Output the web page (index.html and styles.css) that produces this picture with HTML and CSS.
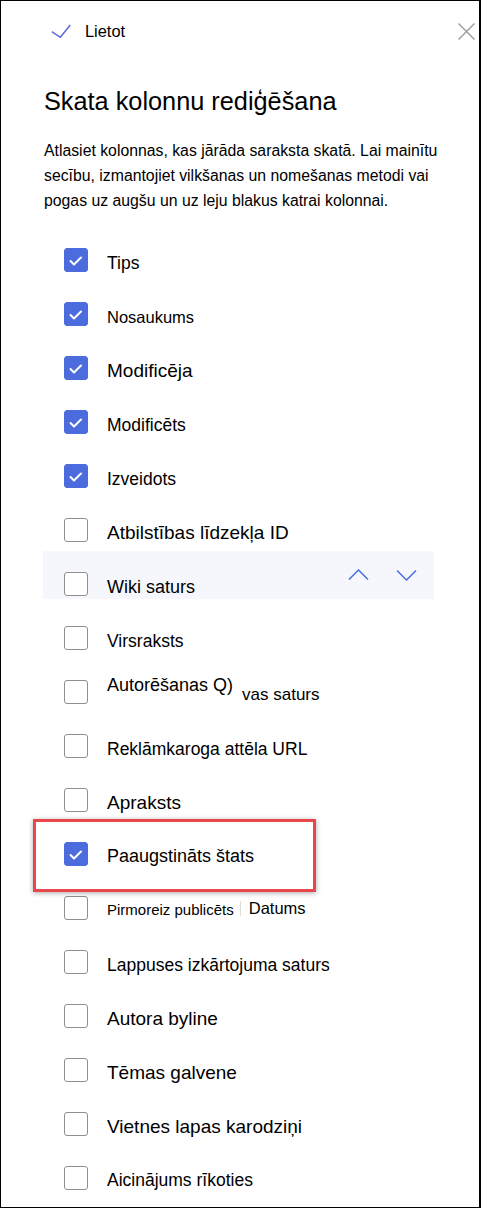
FILE: index.html
```html
<!DOCTYPE html>
<html lang="lv">

<head>
  <meta charset="UTF-8" />
  <meta name="viewport" content="width=device-width, initial-scale=1.0" />
  <title>Skata kolonnu rediģēšana</title>
  <link rel="stylesheet" href="styles.css">
</head>

<body>
  <div class="panel">
    <div class="panel-header">
      <button class="apply">
        <svg width="20" height="14" viewBox="0 0 20 14"><polyline points="0.8,7.6 9.3,13.3 19.3,1" /></svg>
        <span>Lietot</span>
      </button>
      <button class="close">
        <svg width="17" height="17" viewBox="0 0 17 17"><path d="M0.5 0.5 L16.5 16.5 M16.5 0.5 L0.5 16.5" /></svg>
      </button>
    </div>

    <h1 class="panel-title">Skata kolonnu rediģēšana</h1>
    <p class="panel-desc">Atlasiet kolonnas, kas jārāda saraksta skatā. Lai mainītu secību, izmantojiet vilkšanas un nomešanas metodi vai pogas uz augšu un uz leju blakus katrai kolonnai.</p>

    <ul class="columns">
      <li class="column checked"><span class="box"><svg width="24" height="24" viewBox="0 0 24 24"><polyline points="6.5,13 10,16.5 17,9.5" /></svg></span><span class="label s175">Tips</span></li>
      <li class="column checked"><span class="box"><svg width="24" height="24" viewBox="0 0 24 24"><polyline points="6.5,13 10,16.5 17,9.5" /></svg></span><span class="label s165 low">Nosaukums</span></li>
      <li class="column checked"><span class="box"><svg width="24" height="24" viewBox="0 0 24 24"><polyline points="6.5,13 10,16.5 17,9.5" /></svg></span><span class="label s19">Modificēja</span></li>
      <li class="column checked"><span class="box"><svg width="24" height="24" viewBox="0 0 24 24"><polyline points="6.5,13 10,16.5 17,9.5" /></svg></span><span class="label s175">Modificēts</span></li>
      <li class="column checked"><span class="box"><svg width="24" height="24" viewBox="0 0 24 24"><polyline points="6.5,13 10,16.5 17,9.5" /></svg></span><span class="label s175">Izveidots</span></li>
      <li class="column"><span class="box"></span><span class="label s19">Atbilstības līdzekļa ID</span></li>
      <li class="column hovered">
        <span class="box"></span><span class="label s18">Wiki saturs</span>
        <span class="reorder">
          <svg width="21" height="12" viewBox="0 0 21 12"><polyline points="1,10.5 10.5,1 20,10.5" /></svg>
          <svg width="21" height="12" viewBox="0 0 21 12"><polyline points="1,1.5 10.5,11 20,1.5" /></svg>
        </span>
      </li>
      <li class="column"><span class="box"></span><span class="label s175">Virsraksts</span></li>
      <li class="column"><span class="box"></span><span class="label s18 raised">Autorēšanas Q)</span><span class="label s17 extra">vas saturs</span></li>
      <li class="column"><span class="box"></span><span class="label s175">Reklāmkaroga attēla URL</span></li>
      <li class="column"><span class="box"></span><span class="label s19">Apraksts</span></li>
      <li class="column checked flagged"><span class="box"><svg width="24" height="24" viewBox="0 0 24 24"><polyline points="6.5,13 10,16.5 17,9.5" /></svg></span><span class="label s18 low">Paaugstināts štats</span></li>
      <li class="column"><span class="box"></span><span class="label s15 lower">Pirmoreiz publicēts</span><span class="sep"></span><span class="label s165 lower after-sep">Datums</span></li>
      <li class="column"><span class="box"></span><span class="label s175">Lappuses izkārtojuma saturs</span></li>
      <li class="column"><span class="box"></span><span class="label s19">Autora byline</span></li>
      <li class="column"><span class="box"></span><span class="label s19">Tēmas galvene</span></li>
      <li class="column"><span class="box"></span><span class="label s19">Vietnes lapas karodziņi</span></li>
      <li class="column"><span class="box"></span><span class="label s175 low">Aicinājums rīkoties</span></li>
    </ul>
  </div>
</body>

</html>
```

FILE: styles.css
```css
body {
  margin: 0;
  font-family: "Liberation Sans", Arial, sans-serif;
  color: #000;
  background: #fff;
}

.panel {
  width: 481px;
  height: 1208px;
  box-sizing: border-box;
  border: 1px solid #000;
  border-right-width: 2px;
  padding: 0 4px 0 42px;
}

/* header: apply + close */
.panel-header {
  display: flex;
  justify-content: space-between;
  padding-top: 20px;
}

button {
  border: 0;
  background: none;
  padding: 0;
  font: inherit;
  color: inherit;
  cursor: pointer;
}

.apply {
  display: flex;
  align-items: center;
  gap: 14px;
  height: 20px;
  margin-left: 8px;
  font-size: 16.4px;
  line-height: 20px;
}

.apply svg polyline {
  fill: none;
  stroke: #5b6cd8;
  stroke-width: 1.5;
}

.close svg {
  display: block;
}

.close svg path {
  stroke: #9a9a9a;
  stroke-width: 1.4;
}

.panel-title {
  margin: 44px 0 0 1px;
  font-size: 25.3px;
  line-height: 32px;
  font-weight: normal;
}

.panel-desc {
  margin: 21px 0 0 1px;
  width: 404px;
  font-size: 15.8px;
  line-height: 25px;
}

/* column list */
.columns {
  list-style: none;
  margin: 14px 0 0 0;
  padding: 0;
  width: 391px;
}

.column {
  display: flex;
  align-items: flex-end;
  height: 54px;
  box-sizing: border-box;
  padding: 0 17px 9px 21px;
}

.box {
  flex: none;
  width: 24px;
  height: 24px;
  box-sizing: border-box;
  border: 1px solid #8e8e8e;
  border-radius: 3px;
  background: #fff;
}

.box svg {
  display: block;
  margin: -1px;
}

.checked .box {
  border-color: #4c6bdc;
  background: #4c6bdc;
}

.box polyline {
  fill: none;
  stroke: #fff;
  stroke-width: 2;
  stroke-linecap: round;
  stroke-linejoin: round;
}

.label {
  margin-left: 19px;
  line-height: 1;
  white-space: nowrap;
}

.s15 { font-size: 15px; }
.s165 { font-size: 16.5px; }
.s17 { font-size: 17px; }
.s175 { font-size: 17.5px; }
.s18 { font-size: 18px; }
.s19 { font-size: 19px; }

.low { margin-bottom: 1px; }
.lower { margin-bottom: 3.5px; }
.raised { margin-bottom: 10px; }

.extra {
  margin-left: 9px;
  margin-bottom: 1px;
}

.sep {
  width: 1px;
  height: 15px;
  margin: 0 8px 4px 6px;
  background: #dcdcdc;
}

.label.after-sep {
  margin-left: 0;
}

/* row under the pointer */
.hovered {
  background: linear-gradient(#f5f7fd, #f5f7fd) top / 100% 48px no-repeat;
}

.reorder {
  display: flex;
  gap: 27px;
  align-self: flex-start;
  margin-top: 18px;
  margin-left: auto;
}

.reorder polyline {
  fill: none;
  stroke: #4a6ee0;
  stroke-width: 1.5;
}

/* red callout round one row */
.flagged {
  position: relative;
}

.flagged::after {
  content: "";
  position: absolute;
  left: -10px;
  top: -2px;
  width: 283px;
  height: 73px;
  box-sizing: border-box;
  border: 3px solid #e8474b;
  box-shadow: 0 1px 5px rgba(0, 0, 0, 0.35);
}
```
